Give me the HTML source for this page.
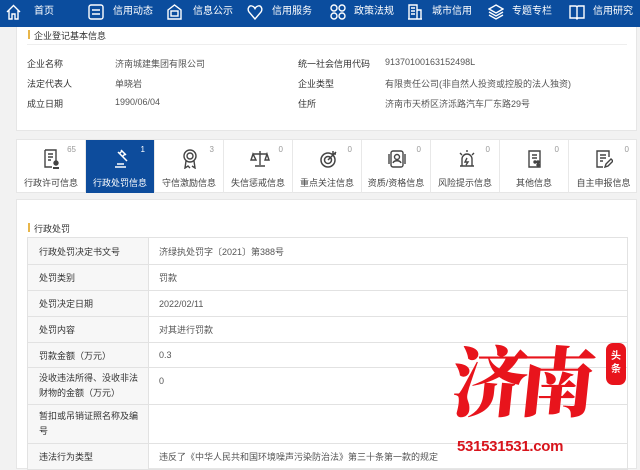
<!DOCTYPE html>
<html><head><meta charset="utf-8"><style>
*{margin:0;padding:0;box-sizing:border-box}
body{width:640px;height:461px;overflow:hidden;background:#f2f2f2;font-family:"Liberation Sans","Noto Sans CJK SC",sans-serif;font-size:9px;color:#333;position:relative}
.nav{position:absolute;left:0;top:0;width:640px;height:27px;background:#0b4d9e;color:#fff}
.nav span{position:absolute;top:5px;font-size:10px;line-height:13px}
.nav svg{position:absolute;top:4px}
.p1{position:absolute;left:16px;top:27px;width:621px;height:104px;background:#fff;border:1px solid #e6e6e6;border-top:0}
.h{position:absolute;font-size:9px;color:#333}
.h:before{content:"";position:absolute;left:-6px;top:1px;width:2px;height:9px;background:#e8b64a}
.lbl{position:absolute;font-size:9px;color:#333}
.val{position:absolute;font-size:9px;color:#555}
.tabs{position:absolute;left:16px;top:139px;width:621px;height:54px;background:#fff;border:1px solid #e6e6e6}
.tab{position:absolute;top:0;width:69px;height:53px;border-right:1px solid #e8e8e8;text-align:center}
.tab .n{position:absolute;right:9px;top:5px;font-size:8px;color:#999}
.tab .t{position:absolute;left:0;right:0;top:36px;font-size:9px;color:#444}
.tab svg{position:absolute;left:26px;top:9px}
.tab.a{background:#0d4c9c}
.tab.a .n,.tab.a .t{color:#fff}
.p2{position:absolute;left:16px;top:199px;width:621px;height:270px;background:#fff;border:1px solid #e6e6e6}
table{position:absolute;left:27px;top:237px;width:601px;border-collapse:collapse}
td{border:1px solid #e2e2e2;font-size:9px;padding:0 10px;vertical-align:middle}
td.l{width:121px;background:#f7f7f7;color:#333;padding-left:11px}
td.r{color:#555}
.wm{position:absolute;color:#e8141c;font-family:"Noto Serif CJK SC","WenQuanYi Zen Hei",serif;font-weight:900}
</style></head><body>
<div class="nav">
<svg style="left:6px" width="15" height="16" viewBox="0 0 15 16" fill="none" stroke="#fff" stroke-width="1.4"><path d="M1 8L7.5 1.5L14 8M3 6.5V15H6V10H9V15H12V6.5"/></svg><span style="left:34px">首页</span>
<svg style="left:88px" width="16" height="16" viewBox="0 0 16 16" fill="none" stroke="#fff" stroke-width="1.4"><rect x="1" y="1" width="14" height="14" rx="2"/><path d="M4 6H12M4 10H12"/></svg><span style="left:113px">信用动态</span>
<svg style="left:167px" width="15" height="16" viewBox="0 0 15 16" fill="none" stroke="#fff" stroke-width="1.4"><path d="M1 6L7.5 1L14 6V15H1Z"/><rect x="4" y="7" width="7" height="5"/></svg><span style="left:193px">信息公示</span>
<svg style="left:247px" width="16" height="16" viewBox="0 0 16 16" fill="none" stroke="#fff" stroke-width="1.4"><path d="M8 15L2 8C0 5 2 1 5 2C6.5 2.3 7.5 3.5 8 4.5C8.5 3.5 9.5 2.3 11 2C14 1 16 5 14 8Z"/></svg><span style="left:272px">信用服务</span>
<svg style="left:330px" width="16" height="16" viewBox="0 0 16 16" fill="none" stroke="#fff" stroke-width="1.4"><rect x="1" y="1" width="6" height="6" rx="3"/><rect x="9" y="1" width="6" height="6" rx="3"/><rect x="1" y="9" width="6" height="6" rx="3"/><rect x="9" y="9" width="6" height="6" rx="3"/></svg><span style="left:354px">政策法规</span>
<svg style="left:407px" width="16" height="16" viewBox="0 0 16 16" fill="none" stroke="#fff" stroke-width="1.4"><path d="M1 15H15M2 15V1H10V15M10 6H14V15M4 4H8M4 7H8M4 10H8"/></svg><span style="left:432px">城市信用</span>
<svg style="left:488px" width="16" height="16" viewBox="0 0 16 16" fill="none" stroke="#fff" stroke-width="1.4"><path d="M8 1L15 5L8 9L1 5Z M1 8L8 12L15 8 M1 11L8 15L15 11"/></svg><span style="left:512px">专题专栏</span>
<svg style="left:569px" width="16" height="16" viewBox="0 0 16 16" fill="none" stroke="#fff" stroke-width="1.4"><path d="M1 2H7L8 3L9 2H15V14H9L8 15L7 14H1Z M8 3V15"/></svg><span style="left:593px">信用研究</span>
</div>
<div class="p1">
<div class="h" style="left:17px;top:2px">企业登记基本信息</div>
<div style="position:absolute;left:10px;top:17px;width:600px;height:1px;background:#eee"></div>
<div class="lbl" style="left:10px;top:30px">企业名称</div><div class="val" style="left:98px;top:30px">济南城建集团有限公司</div>
<div class="lbl" style="left:10px;top:50px">法定代表人</div><div class="val" style="left:98px;top:50px">单晓岩</div>
<div class="lbl" style="left:10px;top:70px">成立日期</div><div class="val" style="left:98px;top:70px">1990/06/04</div>
<div class="lbl" style="left:281px;top:30px">统一社会信用代码</div><div class="val" style="left:368px;top:30px">91370100163152498L</div>
<div class="lbl" style="left:281px;top:50px">企业类型</div><div class="val" style="left:368px;top:50px">有限责任公司(非自然人投资或控股的法人独资)</div>
<div class="lbl" style="left:281px;top:70px">住所</div><div class="val" style="left:368px;top:70px">济南市天桥区济泺路汽车厂东路29号</div>
</div>
<div class="tabs">
<div class="tab" style="left:0"><svg width="18" height="20" viewBox="0 0 18 20" fill="none" stroke="#444" stroke-width="1.4"><path d="M2 1H13V12M2 1V18H9M5 5H10M5 8H10M5 11H8"/><circle cx="13" cy="14" r="2" fill="#444"/><path d="M10 19H16" stroke-width="2"/></svg><div class="n">65</div><div class="t">行政许可信息</div></div>
<div class="tab a" style="left:69px"><svg width="20" height="20" viewBox="0 0 20 20" fill="none" stroke="#fff" stroke-width="1.5"><path d="M6 3L11 8M9 1L14 6M7.5 4.5L10 2L13 5L10.5 7.5M9 6L15 12M3 18H14M5 15H12"/></svg><div class="n">1</div><div class="t">行政处罚信息</div></div>
<div class="tab" style="left:138px"><svg width="18" height="20" viewBox="0 0 18 20" fill="none" stroke="#444" stroke-width="1.4"><circle cx="9" cy="7" r="6"/><circle cx="9" cy="7" r="3"/><path d="M5 12L4 19L7 17L9 19M13 12L14 19L11 17"/></svg><div class="n">3</div><div class="t">守信激励信息</div></div>
<div class="tab" style="left:207px"><svg width="20" height="20" viewBox="0 0 20 20" fill="none" stroke="#444" stroke-width="1.4"><path d="M10 2V16M3 5H17M3 5L1 11H6ZM17 5L15 11H19ZM5 17H15"/></svg><div class="n">0</div><div class="t">失信惩戒信息</div></div>
<div class="tab" style="left:276px"><svg width="20" height="20" viewBox="0 0 20 20" fill="none" stroke="#444" stroke-width="1.5"><circle cx="9" cy="11" r="7"/><circle cx="9" cy="11" r="3.5"/><path d="M9 11L17 3M14 2V5H17"/></svg><div class="n">0</div><div class="t">重点关注信息</div></div>
<div class="tab" style="left:345px"><svg width="18" height="20" viewBox="0 0 18 20" fill="none" stroke="#444" stroke-width="1.4"><rect x="3" y="2" width="12" height="16" rx="2"/><circle cx="9" cy="8" r="2.5"/><path d="M5 14C6 11 12 11 13 14M1 5V15M17 5V15"/></svg><div class="n">0</div><div class="t">资质/资格信息</div></div>
<div class="tab" style="left:414px"><svg width="20" height="20" viewBox="0 0 20 20" fill="none" stroke="#444" stroke-width="1.4"><path d="M5 17V10A5 5 0 0 1 15 10V17M3 17H17M10 1V3M3 4L5 6M17 4L15 6M10 9L8 13H11L9 16"/></svg><div class="n">0</div><div class="t">风险提示信息</div></div>
<div class="tab" style="left:483px"><svg width="18" height="20" viewBox="0 0 18 20" fill="none" stroke="#444" stroke-width="1.4"><path d="M3 2H14V18H3ZM6 6H11M6 9H11"/><circle cx="9" cy="13" r="1" fill="#444"/><circle cx="12" cy="13" r="1" fill="#444"/><circle cx="12" cy="16" r="1" fill="#444"/></svg><div class="n">0</div><div class="t">其他信息</div></div>
<div class="tab" style="left:552px;border-right:0"><svg width="18" height="20" viewBox="0 0 18 20" fill="none" stroke="#444" stroke-width="1.4"><path d="M14 8V2H2V18H8M5 6H11M5 9H11M5 12H8M10 18L11 15L16 10L18 12L13 17Z"/></svg><div class="n">0</div><div class="t">自主申报信息</div></div>
</div>
<div class="p2">
<div class="h" style="left:17px;top:22px">行政处罚</div>
</div>
<table>
<tr style="height:27px"><td class="l">行政处罚决定书文号</td><td class="r">济绿执处罚字〔2021〕第388号</td></tr>
<tr style="height:26px"><td class="l">处罚类别</td><td class="r">罚款</td></tr>
<tr style="height:26px"><td class="l">处罚决定日期</td><td class="r">2022/02/11</td></tr>
<tr style="height:26px"><td class="l">处罚内容</td><td class="r">对其进行罚款</td></tr>
<tr style="height:25px"><td class="l">罚款金额（万元）</td><td class="r">0.3</td></tr>
<tr style="height:37px"><td class="l" style="line-height:15px">没收违法所得、没收非法财物的金额（万元）</td><td class="r" style="vertical-align:top;padding-top:8px">0</td></tr>
<tr style="height:39px"><td class="l" style="line-height:15px">暂扣或吊销证照名称及编号</td><td class="r"></td></tr>
<tr style="height:26px"><td class="l">违法行为类型</td><td class="r">违反了《中华人民共和国环境噪声污染防治法》第三十条第一款的规定</td></tr>
</table>
<div class="wm" style="left:452px;top:338px;font-size:76px;letter-spacing:-8px;line-height:80px;transform:skewX(-6deg)">济南</div>
<div style="position:absolute;left:606px;top:343px;width:20px;height:42px;background:#e8141c;border-radius:7px;color:#fff;font-size:10px;line-height:13px;text-align:center;padding-top:7px;font-weight:bold">头<br>条</div>
<div style="position:absolute;left:457px;top:438px;color:#d8141c;font-weight:bold;font-size:15px;letter-spacing:-0.3px">531531531.com</div>
</body></html>
